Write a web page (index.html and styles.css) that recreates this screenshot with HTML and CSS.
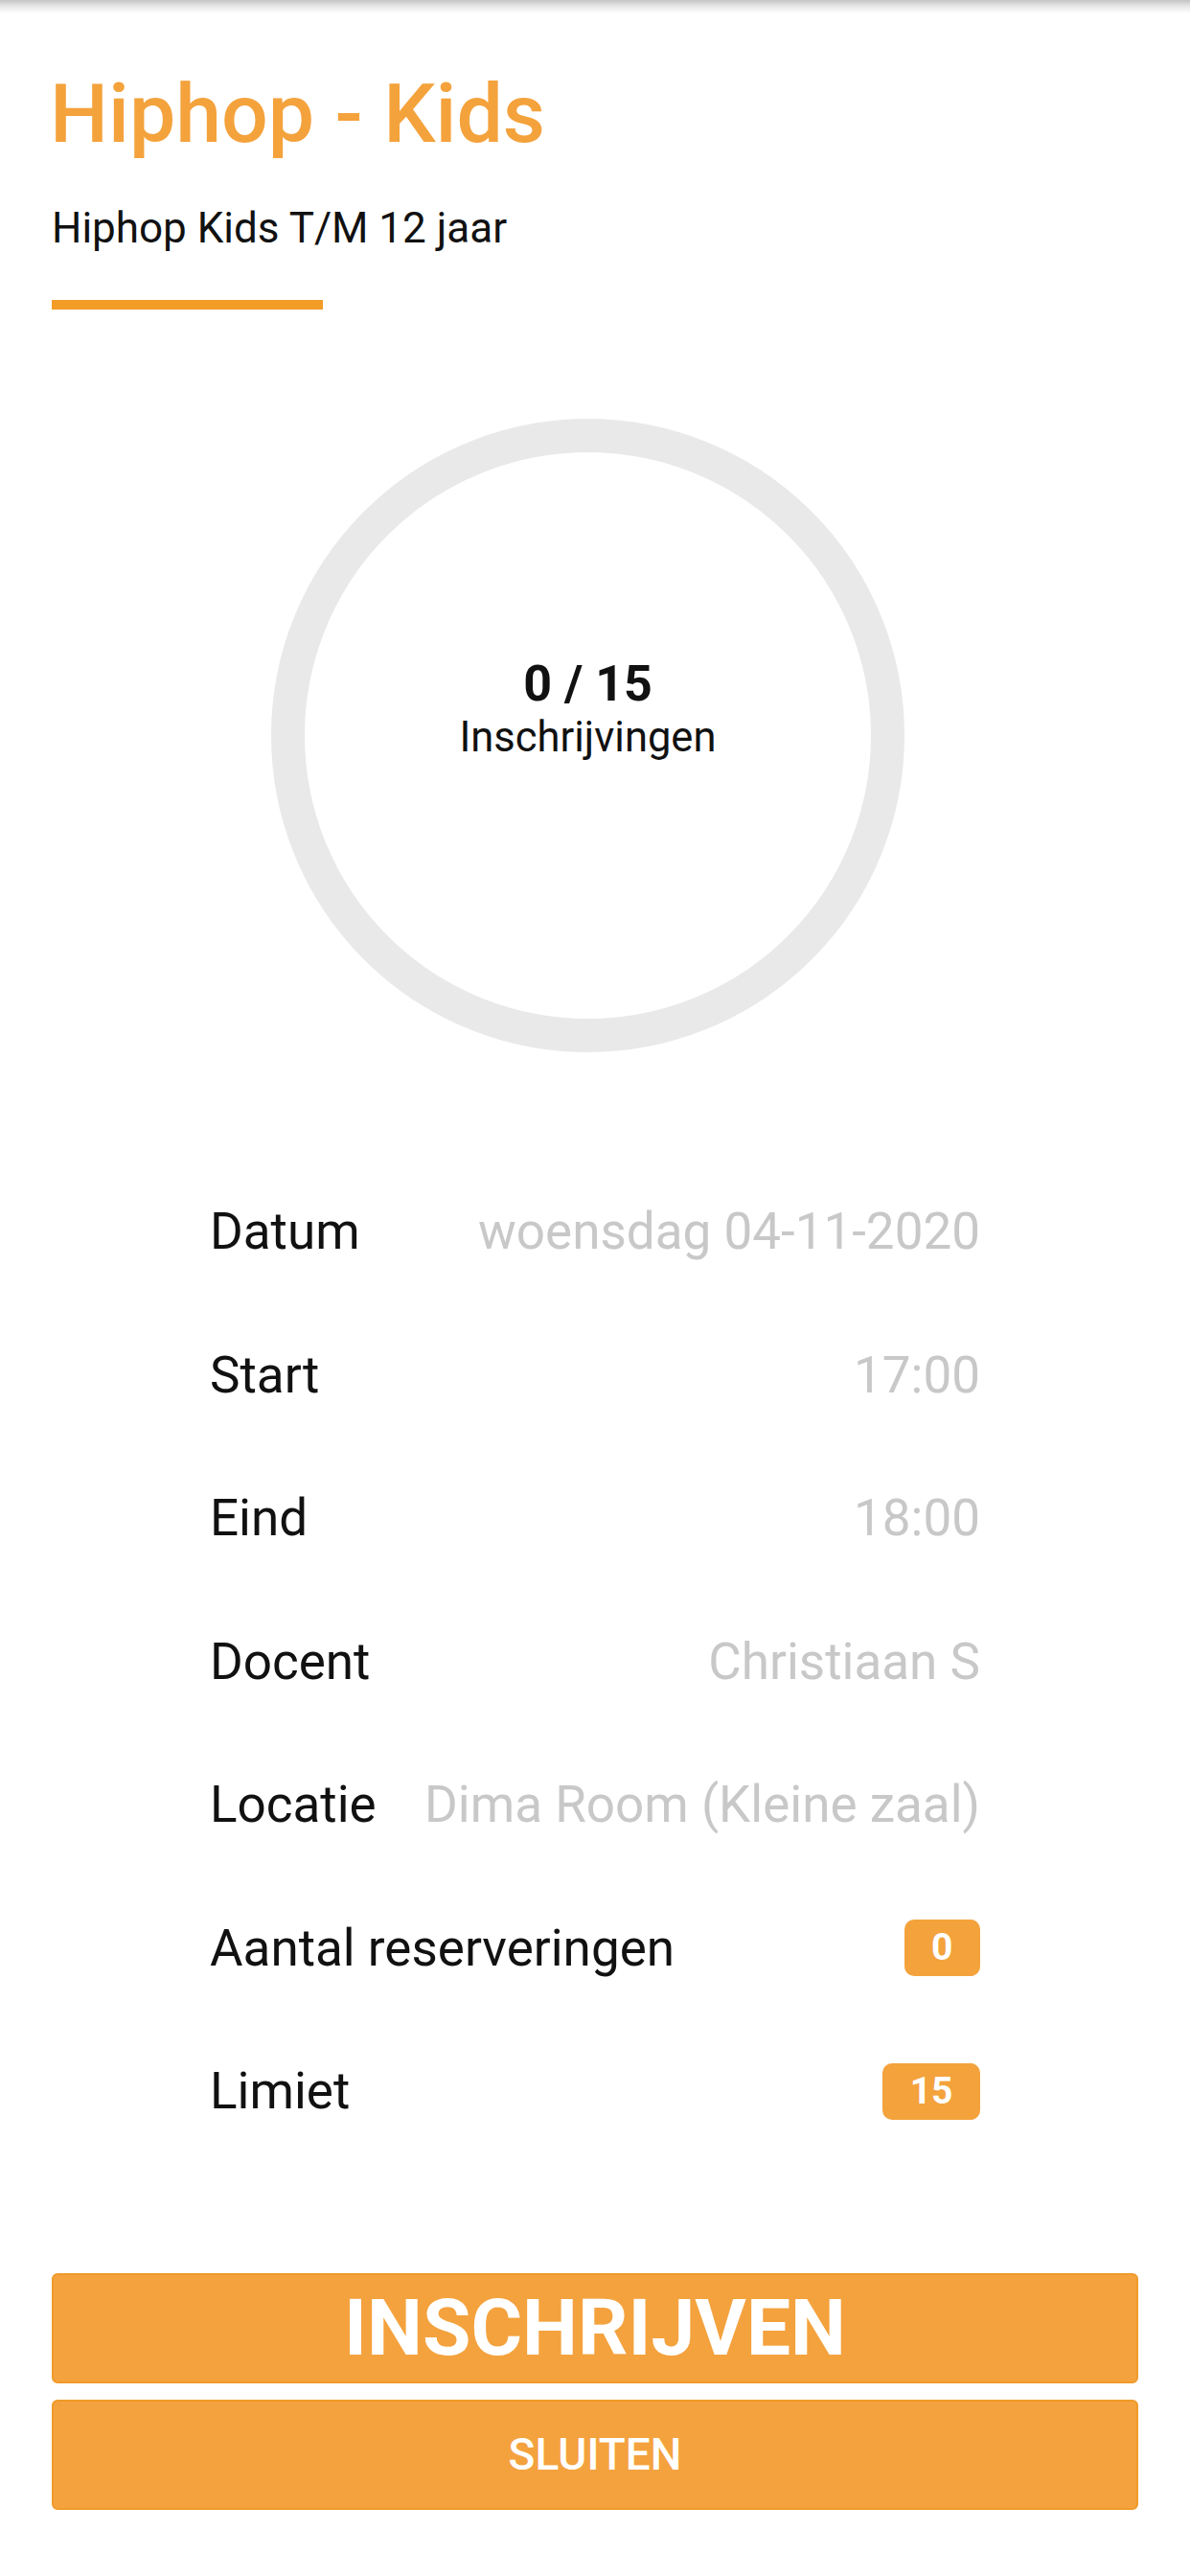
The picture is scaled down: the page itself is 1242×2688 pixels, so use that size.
FILE: index.html
```html
<!DOCTYPE html>
<html lang="nl">
<head>
<meta charset="utf-8">
<title>Hiphop - Kids</title>
<link rel="stylesheet" href="styles.css">
</head>
<body>
<div class="topshadow"></div>
<main class="page">
  <header class="head">
    <h1 class="title">Hiphop - Kids</h1>
    <p class="subtitle">Hiphop Kids T/M 12 jaar</p>
    <div class="accent"></div>
  </header>

  <section class="gauge-wrap">
    <div class="gauge">
      <div class="gauge-inner">
        <div class="count">0 / 15</div>
        <div class="count-label">Inschrijvingen</div>
      </div>
    </div>
  </section>

  <section class="details">
    <div class="row"><span class="label">Datum</span><span class="value">woensdag 04-11-2020</span></div>
    <div class="row"><span class="label">Start</span><span class="value">17:00</span></div>
    <div class="row"><span class="label">Eind</span><span class="value">18:00</span></div>
    <div class="row"><span class="label">Docent</span><span class="value">Christiaan S</span></div>
    <div class="row"><span class="label">Locatie</span><span class="value">Dima Room (Kleine zaal)</span></div>
    <div class="row"><span class="label">Aantal reserveringen</span><span class="badge">0</span></div>
    <div class="row"><span class="label">Limiet</span><span class="badge">15</span></div>
  </section>

  <div class="actions">
    <button class="btn btn-primary" type="button">INSCHRIJVEN</button>
    <button class="btn btn-secondary" type="button">SLUITEN</button>
  </div>
</main>
</body>
</html>
```

FILE: styles.css
```css
* { box-sizing: border-box; }

html, body {
  margin: 0;
  padding: 0;
  background: #ffffff;
  font-family: "Roboto", "Liberation Sans", sans-serif;
  color: #000;
}

.topshadow {
  height: 14px;
  background: linear-gradient(to bottom, #c4c4c4 0%, #e6e6e6 45%, #ffffff 100%);
}

.page {
  padding: 0 54px;
}

.title {
  margin: 54.6px 0 0 -2px;
  font-size: 86px;
  line-height: 100px;
  font-weight: 500;
  color: #f4a23c;
}

.subtitle {
  margin: 43.4px 0 0 0;
  font-size: 44px;
  line-height: 52px;
  font-weight: 400;
  color: #111;
}

.accent {
  margin-top: 49px;
  width: 283px;
  height: 10px;
  background: #f39c26;
}

.gauge-wrap {
  margin-top: 114px;
  display: flex;
  justify-content: center;
  padding-right: 15px;
}

.gauge {
  width: 661px;
  height: 661px;
  border-radius: 50%;
  border: 35px solid #e9e9e9;
  display: flex;
}

.gauge-inner {
  flex: 1;
  display: flex;
  flex-direction: column;
  align-items: center;
  justify-content: center;
  padding-bottom: 54px;
}

.count {
  font-size: 52px;
  line-height: 60px;
  font-weight: 700;
  color: #111;
}

.count-label {
  font-size: 43.5px;
  line-height: 52px;
  font-weight: 400;
  color: #111;
}

.details {
  margin-top: 112.5px;
  padding: 0 165px;
}

.row {
  height: 149.5px;
  display: flex;
  align-items: center;
  justify-content: space-between;
  font-size: 53px;
  line-height: 62px;
}

.label {
  color: #111;
}

.value {
  color: #c8c8c8;
  text-align: right;
}

.badge {
  display: inline-block;
  background: #f4a23c;
  color: #fff;
  font-weight: 700;
  font-size: 39px;
  line-height: 39px;
  padding: 10px 28.5px;
  border-radius: 10px;
}

.actions {
  margin-top: 115px;
  display: flex;
  flex-direction: column;
  gap: 17px;
}

.btn {
  width: 100%;
  height: 115px;
  border: 2px solid #f09a2a;
  border-radius: 6px;
  background: #f4a23e;
  color: #fff;
  font-family: "Roboto", "Liberation Sans", sans-serif;
  display: flex;
  align-items: center;
  justify-content: center;
  padding: 0;
}

.btn-primary {
  font-size: 82px;
  font-weight: 700;
}

.btn-secondary {
  font-size: 46px;
  font-weight: 500;
}
```
